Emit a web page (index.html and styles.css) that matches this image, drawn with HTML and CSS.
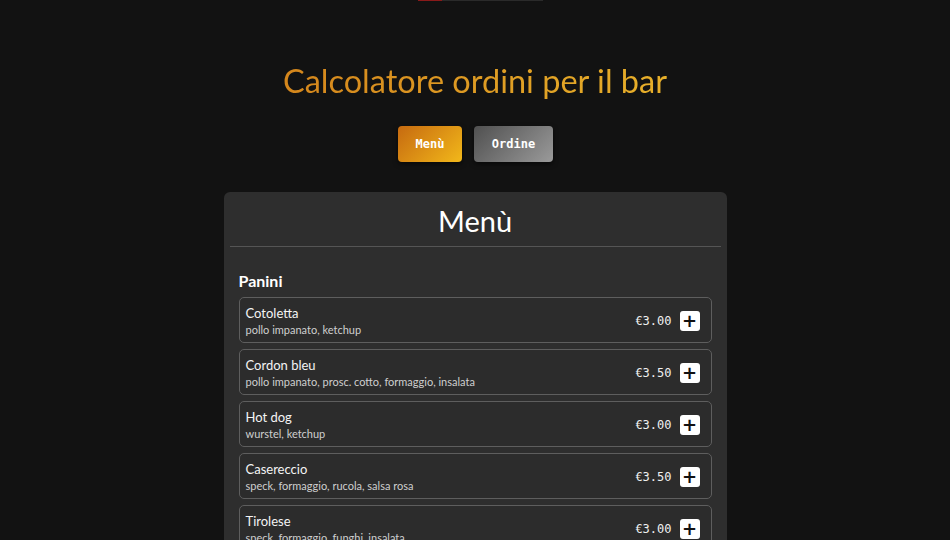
FILE: index.html
```html
<!DOCTYPE html>
<html lang="it">
<head>
<meta charset="utf-8">
<title>Calcolatore ordini per il bar</title>
<link rel="stylesheet" href="styles.css">
</head>
<body>
<div class="topbar"><span class="topbar-fill"></span></div>
<h1 class="title">Calcolatore ordini per il bar</h1>
<nav class="tabs">
  <button class="tab tab-active">Menù</button>
  <button class="tab tab-idle">Ordine</button>
</nav>
<main class="card">
  <h2 class="card-title">Menù</h2>
  <hr class="divider">
  <section class="category">
    <h3 class="cat-title">Panini</h3>
    <div class="items">
      <div class="item">
        <div class="item-info"><div class="item-name">Cotoletta</div><div class="item-desc">pollo impanato, ketchup</div></div>
        <div class="item-price">€3.00</div>
        <button class="add">+</button>
      </div>
      <div class="item">
        <div class="item-info"><div class="item-name">Cordon bleu</div><div class="item-desc">pollo impanato, prosc. cotto, formaggio, insalata</div></div>
        <div class="item-price">€3.50</div>
        <button class="add">+</button>
      </div>
      <div class="item">
        <div class="item-info"><div class="item-name">Hot dog</div><div class="item-desc">wurstel, ketchup</div></div>
        <div class="item-price">€3.00</div>
        <button class="add">+</button>
      </div>
      <div class="item">
        <div class="item-info"><div class="item-name">Casereccio</div><div class="item-desc">speck, formaggio, rucola, salsa rosa</div></div>
        <div class="item-price">€3.50</div>
        <button class="add">+</button>
      </div>
      <div class="item">
        <div class="item-info"><div class="item-name">Tirolese</div><div class="item-desc">speck, formaggio, funghi, insalata</div></div>
        <div class="item-price">€3.00</div>
        <button class="add">+</button>
      </div>
    </div>
  </section>
</main>
</body>
</html>
```
FILE: styles.css
```css
* { box-sizing: border-box; }
html, body { margin: 0; padding: 0; }
body {
  background: #121212;
  color: #f2f2f2;
  font-family: Lato, "Noto Sans", sans-serif;
  display: flex;
  flex-direction: column;
  align-items: center;
}
.topbar {
  width: 125px;
  height: 1px;
  background: #2a2a2a;
  display: flex;
  margin-left: 10px;
}
.topbar-fill {
  width: 24px;
  background: #8a1a1a;
}
.title {
  margin: 60px 0 0;
  font-size: 32.5px;
  font-weight: 400;
  line-height: 40px;
  color: #d99220;
  background: linear-gradient(90deg, #d4861c, #e8b02a);
  -webkit-background-clip: text;
  background-clip: text;
  -webkit-text-fill-color: transparent;
}
.tabs {
  display: flex;
  gap: 12px;
  margin-top: 25px;
  padding-left: 1px;
}
.tab {
  height: 36px;
  border: none;
  border-radius: 4px;
  font-family: "DejaVu Sans Mono", monospace;
  font-weight: 700;
  font-size: 12px;
  color: #ffffff;
  box-shadow: 0 2px 5px rgba(0,0,0,0.6);
}
.tab-active {
  width: 64px;
  padding: 0;
  background: linear-gradient(135deg, #c66a10, #f2b81a);
}
.tab-idle {
  width: 79px;
  padding: 0;
  background: linear-gradient(135deg, #505050, #9a9a9a);
}
.card {
  margin-top: 30px;
  width: 503px;
  background: #2e2e2e;
  border-radius: 6px;
  padding: 8px 6px 10px;
}
.card-title {
  margin: 0;
  text-align: center;
  font-size: 29px;
  font-weight: 400;
  line-height: 42px;
  color: #ffffff;
}
.divider {
  margin: 4px 0 0;
  border: none;
  border-top: 1px solid #555555;
}
.category {
  padding: 0 9px;
}
.cat-title {
  margin: 22px 0 4px;
  font-size: 16px;
  font-weight: 700;
  line-height: 24px;
  color: #ffffff;
}
.items {
  display: flex;
  flex-direction: column;
  gap: 6px;
}
.item {
  height: 46px;
  border: 1px solid #5e5e5e;
  border-radius: 5px;
  display: flex;
  align-items: center;
  padding: 1px 11px 0 6px;
  background: #2c2c2c;
}
.item-info {
  flex: 1;
  display: flex;
  flex-direction: column;
}
.item-name {
  font-size: 13px;
  line-height: 17px;
  color: #f4f4f4;
}
.item-desc {
  font-size: 11px;
  line-height: 15px;
  color: #cfcfcf;
}
.item-price {
  font-family: "DejaVu Sans Mono", monospace;
  font-size: 12px;
  color: #f0f0f0;
  margin-right: 8px;
}
.add {
  width: 20px;
  height: 20px;
  border: none;
  border-radius: 3px;
  background: #ffffff;
  color: #111111;
  font-family: "DejaVu Sans", sans-serif;
  font-weight: 700;
  font-size: 18px;
  line-height: 20px;
  padding: 0;
  display: flex;
  align-items: center;
  justify-content: center;
}
```
